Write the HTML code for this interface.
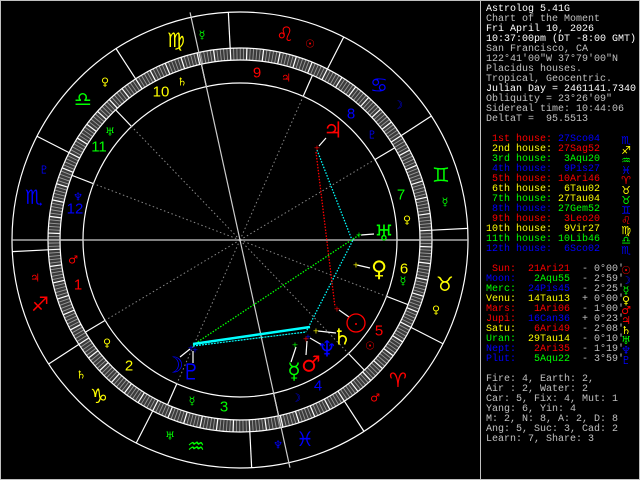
<!DOCTYPE html>
<html><head><meta charset="utf-8"><style>
html,body{margin:0;padding:0;background:#000;}
#w{position:relative;width:640px;height:480px;background:#000;overflow:hidden;}
#frame{position:absolute;left:0;top:0;width:638px;height:478px;border:1px solid #c0c0c0;}
#sep{position:absolute;left:480px;top:0;width:1px;height:480px;background:#c0c0c0;}
#t{position:absolute;left:486px;top:5px;font-family:"Liberation Mono",monospace;font-size:10px;line-height:10px;white-space:pre;color:#c0c0c0;}
.W{color:#fff}.R{color:#f00}.Y{color:#ff0}.G{color:#0f0}.B{color:#00f}
.gl{position:absolute;left:618px;font-family:"DejaVu Sans",sans-serif;font-size:11px;line-height:10px;width:16px;text-align:center}
svg text{font-family:"DejaVu Sans",sans-serif;text-anchor:middle;dominant-baseline:central}
.n{font-family:"Liberation Sans",sans-serif!important;font-size:15px}
</style></head><body><div id="w">
<svg id="s" width="480" height="480" style="position:absolute;left:0;top:0">
<g id="lines"></g>
<g font-size="20">
<text x="398" y="380" fill="#f00">♈︎</text>
<text x="445" y="284" fill="#ff0">♉︎</text>
<text x="441" y="175" fill="#0f0">♊︎</text>
<text x="379" y="85" fill="#00f">♋︎</text>
<text x="285" y="34" fill="#f00">♌︎</text>
<text x="176" y="40" fill="#ff0">♍︎</text>
<text x="83" y="99" fill="#0f0">♎︎</text>
<text x="34" y="197" fill="#00f">♏︎</text>
<text x="40" y="304" fill="#f00">♐︎</text>
<text x="99" y="396" fill="#ff0">♑︎</text>
<text x="196" y="446" fill="#0f0">♒︎</text>
<text x="305" y="439" fill="#00f">♓︎</text>
</g>
<g font-size="11">
<text x="375" y="398" fill="#f00">♂</text>
<text x="436" y="310" fill="#ff0">♀</text>
<text x="445" y="202" fill="#0f0">☿</text>
<text x="398" y="105" fill="#00f">☽</text>
<text x="310" y="44" fill="#f00">☉</text>
<text x="202" y="35" fill="#0f0">☿</text>
<text x="105" y="82" fill="#ff0">♀</text>
<text x="44" y="170" fill="#00f">♇</text>
<text x="35" y="278" fill="#f00">♃</text>
<text x="81" y="375" fill="#ff0">♄</text>
<text x="170" y="436" fill="#0f0">♅</text>
<text x="278" y="445" fill="#00f">♆</text>
<text x="73" y="260" fill="#f00">♂</text>
<text x="107" y="343" fill="#ff0">♀</text>
<text x="192" y="401" fill="#0f0">☿</text>
<text x="296" y="398" fill="#00f">☽</text>
<text x="370" y="346" fill="#f00">☉</text>
<text x="403" y="281" fill="#0f0">☿</text>
<text x="407" y="220" fill="#ff0">♀</text>
<text x="372" y="135" fill="#00f">♇</text>
<text x="286" y="78" fill="#f00">♃</text>
<text x="182" y="82" fill="#ff0">♄</text>
<text x="110" y="132" fill="#0f0">♅</text>
<text x="78" y="197" fill="#00f">♆</text>
</g>
<g class="n">
<text class="n" x="78" y="285" fill="#f00">1</text>
<text class="n" x="129" y="366" fill="#ff0">2</text>
<text class="n" x="224" y="407" fill="#0f0">3</text>
<text class="n" x="318" y="386" fill="#00f">4</text>
<text class="n" x="379" y="331" fill="#f00">5</text>
<text class="n" x="404" y="269" fill="#ff0">6</text>
<text class="n" x="401" y="195" fill="#0f0">7</text>
<text class="n" x="351" y="114" fill="#00f">8</text>
<text class="n" x="257" y="73" fill="#f00">9</text>
<text class="n" x="161" y="92" fill="#ff0">10</text>
<text class="n" x="99" y="147" fill="#0f0">11</text>
<text class="n" x="75" y="209" fill="#00f">12</text>
</g>
<g fill="none" stroke-dasharray="1.5 1.5" stroke-width="1.3">
<line x1="317" y1="150" x2="352" y2="240" stroke="#0ff"/>
<line x1="354" y1="238" x2="306" y2="332" stroke="#0ff"/>
<line x1="316" y1="152" x2="335" y2="307" stroke="#f00"/>
<line x1="359" y1="235" x2="193" y2="345" stroke="#0f0"/>
</g>
<line x1="193" y1="344" x2="310" y2="327" stroke="#0ff" stroke-width="2.5"/>
<line x1="193" y1="346" x2="306" y2="332" stroke="#0ff" stroke-width="1.2" stroke-dasharray="2 1"/>
<g stroke="#fff" stroke-width="1.2">
<line x1="319" y1="146" x2="326" y2="138"/>
<line x1="361" y1="235" x2="374" y2="234"/>
<line x1="357" y1="265" x2="370" y2="268"/>
<line x1="339" y1="310" x2="349" y2="317"/>
<line x1="318" y1="331" x2="336" y2="333"/>
<line x1="310" y1="338" x2="322" y2="345"/>
<line x1="307" y1="341" x2="306" y2="355"/>
<line x1="296" y1="347" x2="291" y2="362"/>
<line x1="190" y1="349" x2="180" y2="357"/>
<line x1="193" y1="351" x2="193" y2="363"/>
</g>
<g font-size="8" font-family="Liberation Mono">
<text x="317" y="148" fill="#f00">+</text>
<text x="359" y="235" fill="#0f0">+</text>
<text x="356" y="265" fill="#ff0">+</text>
<text x="337" y="309" fill="#f00">+</text>
<text x="316" y="331" fill="#ff0">+</text>
<text x="308" y="337" fill="#00f">+</text>
<text x="306" y="339" fill="#f00">+</text>
<text x="295" y="345" fill="#0f0">+</text>
<text x="191" y="348" fill="#00f">+</text>
<text x="195" y="350" fill="#00f">+</text>
</g>
<g font-size="22">
<text x="333" y="131" fill="#f00">♃</text>
<text x="384" y="234" fill="#0f0">♅</text>
<text x="379" y="270" fill="#ff0">♀</text>
<text x="342" y="338" fill="#ff0">♄</text>
<text x="327" y="350" fill="#00f">♆</text>
<text x="311" y="365" fill="#f00">♂</text>
<text x="294" y="372" fill="#0f0">☿</text>
<text x="174" y="366" fill="#00f">☽</text>
<text x="191" y="373" fill="#00f">♇</text>
</g>
<circle cx="356" cy="323" r="9" fill="none" stroke="#f00" stroke-width="1.3"/>
<circle cx="356" cy="324" r="1" fill="#f00"/>
</svg>
<div id="frame"></div><div id="sep"></div>
<div id="t"><span class="W">Astrolog 5.41G</span>
Chart of the Moment
<span class="W">Fri April 10, 2026</span>
<span class="W">10:37:00pm (DT -8:00 GMT)</span>
San Francisco, CA
122°41'00"W 37°79'00"N
Placidus houses.
Tropical, Geocentric.
<span class="W">Julian Day = 2461141.7340</span>
Obliquity = 23°26'09"
Sidereal time: 10:44:06
DeltaT =  95.5513

<span class="R"> 1st house:</span> <span class="B">27Sco04</span>
<span class="Y"> 2nd house:</span> <span class="R">27Sag52</span>
<span class="G"> 3rd house:</span> <span class="G"> 3Aqu20</span>
<span class="B"> 4th house:</span> <span class="B"> 9Pis27</span>
<span class="R"> 5th house:</span> <span class="R">10Ari46</span>
<span class="Y"> 6th house:</span> <span class="Y"> 6Tau02</span>
<span class="G"> 7th house:</span> <span class="Y">27Tau04</span>
<span class="B"> 8th house:</span> <span class="G">27Gem52</span>
<span class="R"> 9th house:</span> <span class="R"> 3Leo20</span>
<span class="Y">10th house:</span> <span class="Y"> 9Vir27</span>
<span class="G">11th house:</span> <span class="G">10Lib46</span>
<span class="B">12th house:</span> <span class="B"> 6Sco02</span>

<span class="R"> Sun:</span>  <span class="R">21Ari21</span>  - 0°00'
<span class="B">Moon:</span>   <span class="G">2Aqu55</span>  - 2°59'
<span class="G">Merc:</span>  <span class="B">24Pis45</span>  - 2°25'
<span class="Y">Venu:</span>  <span class="Y">14Tau13</span>  + 0°00'
<span class="R">Mars:</span>   <span class="R">1Ari06</span>  - 1°00'
<span class="R">Jupi:</span>  <span class="B">16Can36</span>  + 0°23'
<span class="Y">Satu:</span>   <span class="R">6Ari49</span>  - 2°08'
<span class="G">Uran:</span>  <span class="Y">29Tau14</span>  - 0°10'
<span class="B">Nept:</span>   <span class="R">2Ari35</span>  - 1°19'
<span class="B">Plut:</span>   <span class="G">5Aqu22</span>  - 3°59'

Fire: 4, Earth: 2,
Air : 2, Water: 2
Car: 5, Fix: 4, Mut: 1
Yang: 6, Yin: 4
M: 2, N: 8, A: 2, D: 8
Ang: 5, Suc: 3, Cad: 2
Learn: 7, Share: 3</div>
<div class="gl B" style="top:136px">♏︎</div>
<div class="gl Y" style="top:146px">♐︎</div>
<div class="gl G" style="top:156px">♒︎</div>
<div class="gl B" style="top:166px">♓︎</div>
<div class="gl R" style="top:176px">♈︎</div>
<div class="gl Y" style="top:186px">♉︎</div>
<div class="gl G" style="top:196px">♉︎</div>
<div class="gl B" style="top:206px">♊︎</div>
<div class="gl R" style="top:216px">♌︎</div>
<div class="gl Y" style="top:226px">♍︎</div>
<div class="gl G" style="top:236px">♎︎</div>
<div class="gl B" style="top:246px">♏︎</div>
<div class="gl R" style="top:266px">☉</div>
<div class="gl B" style="top:276px">☽</div>
<div class="gl G" style="top:286px">☿</div>
<div class="gl Y" style="top:296px">♀</div>
<div class="gl R" style="top:306px">♂</div>
<div class="gl R" style="top:316px">♃</div>
<div class="gl Y" style="top:326px">♄</div>
<div class="gl G" style="top:336px">♅</div>
<div class="gl B" style="top:346px">♆</div>
<div class="gl B" style="top:356px">♇</div>
</div>
<script>
(function(){
var g=document.getElementById('lines'),NS='http://www.w3.org/2000/svg',cx=240,cy=240;
function el(n,a){var e=document.createElementNS(NS,n);for(var k in a)e.setAttribute(k,a[k]);g.appendChild(e);return e;}
function P(r,phi){var a=phi*Math.PI/180;return [cx+r*Math.cos(a),cy-r*Math.sin(a)];}
function L(r1,r2,phi,attrs){var p=P(r1,phi),q=P(r2,phi);var o={x1:p[0],y1:p[1],x2:q[0],y2:q[1],stroke:'#fff','stroke-width':1.2};for(var k in attrs)o[k]=attrs[k];el('line',o);}
el('circle',{cx:cx,cy:cy,r:186,fill:'none',stroke:'#3a3a3a','stroke-width':12});
for(var d=0;d<360;d++){var phi=d-57.07;L(180,192,phi,{stroke:(d%5==0?'#fff':'#9a9a9a'),'stroke-width':(d%5==0?1.2:0.9)});}
[228,192,180,157].forEach(function(r){el('circle',{cx:cx,cy:cy,r:r,fill:'none',stroke:'#fff','stroke-width':1.2});});
for(var k=0;k<12;k++){L(192,228,30*k-57.07);}
var cusps=[237.07,267.87,303.33,339.45,10.77,36.03,57.07,87.87,123.33,159.45,190.77,216.03];
cusps.forEach(function(l,i){var phi=l-57.07;L(157,180,phi);
 if(i%3!=0){L(0,157,phi,{stroke:'#888','stroke-dasharray':'1.5 2.5','stroke-width':1});}});
L(0,228,180,{stroke:'#ccc'});L(0,228,0,{stroke:'#ccc'});
L(0,233,102.38,{stroke:'#ccc'});L(0,233,282.38,{stroke:'#ccc'});
})();
</script>
</body></html>
